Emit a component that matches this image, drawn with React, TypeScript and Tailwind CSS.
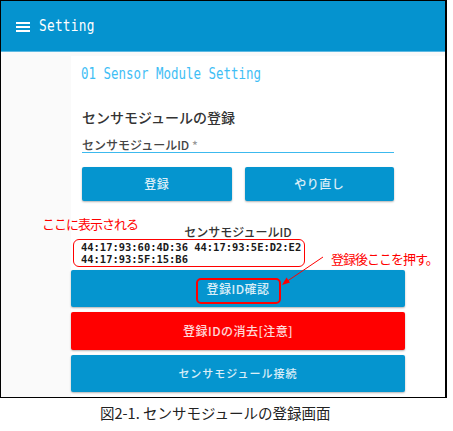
export default function App() {
  const jp = "font-['Noto_Sans_CJK_JP',sans-serif]"
  const mono = "font-['DejaVu_Sans_Mono',monospace]"

  return (
    <div className={`relative w-[453px] h-[431px] bg-white ${jp}`}>
      <div className="flex flex-col w-[447px] h-[398px] border border-r-2 border-black overflow-hidden">
        <header className="flex items-center h-[51px] shrink-0 bg-[#0593cf] border-b border-[#5db9e2] pl-[15px] text-white">
          <div className="flex flex-col gap-[2px] w-[14px] mt-[1px]">
            <span className="h-[2px] bg-white" />
            <span className="h-[2px] bg-white" />
            <span className="h-[2px] bg-white" />
          </div>
          <span className={`ml-[9px] inline-block origin-left scale-x-[0.8] text-[16px] leading-none tracking-[0.3px] ${mono}`}>
            Setting
          </span>
        </header>

        <main className="flex flex-1 bg-[#fafafa]">
          <div className="w-[70px] shrink-0" />
          <div className="flex-1 mt-[4px] bg-white">
            <div className="flex flex-col w-[334px]">
              <div className="pl-[10px] mt-[7px] h-[18px] leading-[18px]">
                <span className={`inline-block origin-left scale-x-[0.83] text-[15px] text-[#3fbef5] ${mono}`}>
                  01 Sensor Module Setting
                </span>
              </div>

              <div className="px-[11px]">
                <h2 className="mt-[26px] h-[20px] leading-[20px] text-[14px] font-medium text-[#333]">
                  センサモジュールの登録
                </h2>
                <div className="mt-[11px] border-b border-[#3cb9ee]">
                  <div className="h-[14px] leading-[14px] text-[12px] font-medium text-[#444]">
                    センサモジュールID <span className="text-[#999]">*</span>
                  </div>
                </div>
                <div className="grid grid-cols-2 gap-[13px] mt-[14px]">
                  <button className="h-[34px] rounded-[2px] bg-[#0595cf] shadow-[0_1px_2px_rgba(0,0,0,0.3)] text-[12px] font-medium tracking-[0.5px] text-white/85">
                    登録
                  </button>
                  <button className="h-[34px] rounded-[2px] bg-[#0595cf] shadow-[0_1px_2px_rgba(0,0,0,0.3)] text-[12px] font-medium tracking-[0.5px] text-white/85">
                    やり直し
                  </button>
                </div>
              </div>

              <div className="mt-[24px] h-[14px] leading-[14px] text-center text-[12px] font-medium text-[#333]">
                センサモジュールID
              </div>
              <div className={`mt-[3px] pl-[10px] text-[11px] leading-[12px] font-bold text-[#1a1a1a] ${mono}`}>
                <div className="h-[12px] origin-left scale-x-[0.95] whitespace-nowrap">44:17:93:60:4D:36 44:17:93:5E:D2:E2</div>
                <div className="h-[12px] origin-left scale-x-[0.95] whitespace-nowrap">44:17:93:5F:15:B6</div>
              </div>

              <button className="mt-[4px] h-[37px] rounded-[2px] bg-[#0595cf] shadow-[0_1px_2px_rgba(0,0,0,0.3)] text-[12px] font-medium tracking-[0.5px] text-white/85">
                登録ID確認
              </button>
              <button className="mt-[5px] h-[38px] rounded-[2px] bg-[#ff0000] shadow-[0_1px_2px_rgba(0,0,0,0.3)] text-[12px] font-medium tracking-[0.5px] text-white/85">
                登録IDの消去[注意]
              </button>
              <button className="mt-[5px] h-[37px] rounded-[2px] bg-[#0595cf] shadow-[0_1px_2px_rgba(0,0,0,0.3)] text-[11px] font-medium tracking-[1px] text-white/85">
                センサモジュール接続
              </button>
            </div>
          </div>
        </main>
      </div>

      <p className="mt-[6px] pl-[100px] text-[14.5px] leading-[18px] text-[#222]">
        図2-1. センサモジュールの登録画面
      </p>

      {/* annotations */}
      <span className="absolute left-[42px] top-[216px] text-[13px] leading-[16px] tracking-[-1px] text-[#ff0000]">
        ここに表示される
      </span>
      <div className="absolute left-[73px] top-[239px] w-[232px] h-[28px] rounded-[6px] border border-[#ff0000]" />
      <div className="absolute left-[196px] top-[278px] w-[85px] h-[26px] rounded-[5px] border-2 border-[#ff0000]" />
      <span className="absolute left-[331px] top-[251px] text-[13px] leading-[16px] tracking-[-1px] text-[#ff0000]">
        登録後ここを押す。
      </span>
      <svg className="absolute left-0 top-0" width="453" height="431" viewBox="0 0 453 431" fill="none">
        <line x1="323" y1="257" x2="286" y2="282" stroke="#ff0000" strokeWidth="1" />
        <path d="M282 285 L286.5 277.5 L290 282.5 Z" fill="#ff0000" />
      </svg>
    </div>
  )
}
